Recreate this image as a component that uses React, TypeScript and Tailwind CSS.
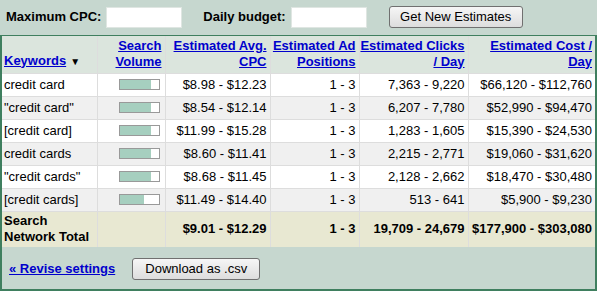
import React from "react";

interface Row {
  keyword: string;
  volume: number;
  cpc: string;
  pos: string;
  clicks: string;
  cost: string;
}

const rows: Row[] = [
  { keyword: "credit card", volume: 31, cpc: "$8.98 - $12.23", pos: "1 - 3", clicks: "7,363 - 9,220", cost: "$66,120 - $112,760" },
  { keyword: "\"credit card\"", volume: 31, cpc: "$8.54 - $12.14", pos: "1 - 3", clicks: "6,207 - 7,780", cost: "$52,990 - $94,470" },
  { keyword: "[credit card]", volume: 31, cpc: "$11.99 - $15.28", pos: "1 - 3", clicks: "1,283 - 1,605", cost: "$15,390 - $24,530" },
  { keyword: "credit cards", volume: 31, cpc: "$8.60 - $11.41", pos: "1 - 3", clicks: "2,215 - 2,771", cost: "$19,060 - $31,620" },
  { keyword: "\"credit cards\"", volume: 31, cpc: "$8.68 - $11.45", pos: "1 - 3", clicks: "2,128 - 2,662", cost: "$18,470 - $30,480" },
  { keyword: "[credit cards]", volume: 24, cpc: "$11.49 - $14.40", pos: "1 - 3", clicks: "513 - 641", cost: "$5,900 - $9,230" },
];

const headLink = "font-bold text-[#0000cc] underline";
const btn =
  "rounded-[3px] border border-[#707070] bg-gradient-to-b from-[#f6f6f6] to-[#dddddd] text-[13px] text-black";

export default function App() {
  return (
    <div className="h-[291px] w-[597px] bg-[#c6d7cf] font-['Liberation_Sans',Arial,sans-serif] text-[13px] leading-[16px] text-black">
      {/* filtres */}
      <div className="flex h-[35px] items-center pb-[1px]">
        <span className="ml-[6px] font-bold">Maximum CPC:</span>
        <input className="ml-[5px] h-[21px] w-[76px] border border-[#dfe6e2] bg-white" />
        <span className="ml-[21px] font-bold">Daily budget:</span>
        <input className="ml-[5px] h-[21px] w-[76px] border border-[#dfe6e2] bg-white" />
        <button className={`${btn} ml-[22px] h-[22px] w-[134px]`}>Get New Estimates</button>
      </div>

      {/* tableau */}
      <div className="h-[256px] border-x-2 border-b-2 border-t border-[#3f7f5f]">
        <table className="w-full table-fixed border-collapse">
          <colgroup>
            <col className="w-[95px]" />
            <col className="w-[68px]" />
            <col className="w-[105px]" />
            <col className="w-[89px]" />
            <col className="w-[109px]" />
            <col />
          </colgroup>
          <thead>
            <tr className="h-[37px] bg-[#dbe5dd]">
              <th className="border-r border-[#dddddd] px-[2px] pb-[3px] text-left align-bottom font-normal">
                <span className={headLink}>Keywords</span>
                <span className="ml-[4px] text-[10px]">▼</span>
              </th>
              <th className="border-r border-[#dddddd] pr-[3px] pb-[3px] text-right align-bottom">
                <span className={headLink}>Search Volume</span>
              </th>
              <th className="border-r border-[#dddddd] pr-[3px] pb-[3px] text-right align-bottom">
                <span className={headLink}>Estimated Avg. CPC</span>
              </th>
              <th className="border-r border-[#dddddd] pr-[3px] pb-[3px] text-right align-bottom">
                <span className={headLink}>Estimated Ad Positions</span>
              </th>
              <th className="border-r border-[#dddddd] pr-[3px] pb-[3px] text-right align-bottom">
                <span className={headLink}>Estimated Clicks / Day</span>
              </th>
              <th className="pr-[3px] pb-[3px] text-right align-bottom">
                <span className={headLink}>Estimated Cost / Day</span>
              </th>
            </tr>
          </thead>
          <tbody>
            {rows.map((r, i) => (
              <tr key={r.keyword} className={`h-[23px] ${i % 2 ? "bg-[#f0f0f0]" : "bg-white"}`}>
                <td className="border border-l-0 border-[#dddddd] px-[2px] whitespace-nowrap">{r.keyword}</td>
                <td className="border border-[#dddddd] pr-[5px]">
                  <div className="ml-auto flex h-[11px] w-[41px] border border-[#999999] bg-white">
                    <div className="h-full bg-[#a6cfbf]" style={{ width: r.volume }} />
                  </div>
                </td>
                <td className="border border-[#dddddd] pr-[3px] text-right">{r.cpc}</td>
                <td className="border border-[#dddddd] pr-[3px] text-right">{r.pos}</td>
                <td className="border border-[#dddddd] pr-[3px] text-right">{r.clicks}</td>
                <td className="border border-r-0 border-[#dddddd] pr-[3px] text-right">{r.cost}</td>
              </tr>
            ))}
            <tr className="h-[36px] bg-[#e8e8d2] font-bold">
              <td className="border-r border-[#dddddd] px-[2px]">Search Network Total</td>
              <td className="border-r border-[#dddddd]" />
              <td className="border-r border-[#dddddd] pr-[3px] text-right">$9.01 - $12.29</td>
              <td className="border-r border-[#dddddd] pr-[3px] text-right">1 - 3</td>
              <td className="border-r border-[#dddddd] pr-[3px] text-right">19,709 - 24,679</td>
              <td className="pr-[3px] text-right whitespace-nowrap">$177,900 - $303,080</td>
            </tr>
          </tbody>
        </table>

        {/* actions */}
        <div className="flex h-[42px] items-center pt-[1px]">
          <a className="ml-[7px] font-bold text-[#0000cc] underline">« Revise settings</a>
          <button className={`${btn} ml-[17px] h-[22px] w-[128px]`}>Download as .csv</button>
        </div>
      </div>
    </div>
  );
}
